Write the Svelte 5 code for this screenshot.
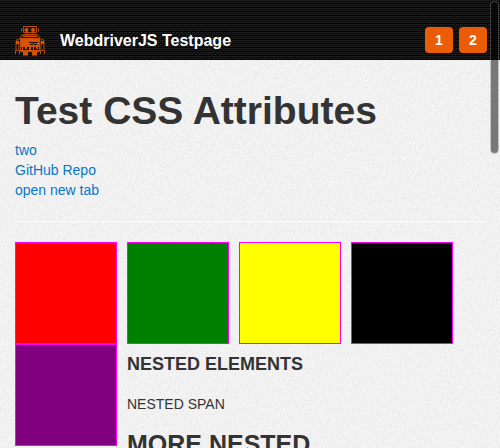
<script>
  const pages = [1, 2];
  const links = ['two', 'GitHub Repo', 'open new tab'];
  const boxes = ['red', 'green', 'yellow', 'black'];
</script>

<div class="page">
  <header>
    <a class="brand" href="#home">
      <svg class="logo" viewBox="0 0 30 30" aria-hidden="true">
        <g fill="none" stroke="#b84906" stroke-width="1">
          <path d="M8.500 6.500V.5h13v6zM6.500 2.500v3M23.500 2.500v3M12 7v1.500M18 7v1.500" />
          <path d="M5.500 25.500V12q0-3.500 3.500-3.500h12q3.500 0 3.500 3.500v13.500z" />
          <path d="M5 13H3.500Q1 13 1 16v8M25 13h1.500Q29 13 29 16v8M4 15v9M26 15v9" />
          <path d="M.5 28v-3.500h4V28M25.500 28v-3.500h4V28" />
        </g>
        <g fill="#d65202">
          <circle cx="11.500" cy="4" r="2" />
          <circle cx="18" cy="4" r="2" />
          <path d="M8 9.500h14v1.500H8zM6 12h18v8H6zM6 20h18v1H6zM6 24h18v1.500H6zM8 26h5v3.500H8zM17 26h5v3.500h-5z" />
          <path d="M7 21h1v3H7zM10 21h2v2h-2zM14 21h2v3h-2zM18 21h1v3h-1zM21 21h2v2h-2z" />
          <path d="M1 15h3v3H1zM26 15h3v3h-3z" />
        </g>
        <path stroke="#1d0c03" fill="none" d="M14 16.500h9M15 18.500h3M19 18.500h3M18.500 16v2" />
      </svg>
      <strong>WebdriverJS Testpage</strong>
    </a>
    <nav aria-label="Pages">
      {#each pages as page}
        <button type="button">{page}</button>
      {/each}
    </nav>
  </header>

  <main>
    <svg class="grain" aria-hidden="true">
      <filter id="paper" x="0" y="0" width="100%" height="100%">
        <feTurbulence type="fractalNoise" baseFrequency=".5" numOctaves="2" />
        <feColorMatrix values="0 0 0 0 0  0 0 0 0 0  0 0 0 0 0  .09 0 0 0 -.024" />
      </filter>
      <rect width="100%" height="100%" filter="url(#paper)" />
    </svg>
    <h1>Test CSS Attributes</h1>
    <ul>
      {#each links as link}
        <li><a href="#{link}">{link}</a></li>
      {/each}
    </ul>
    <hr />
    <div class="boxes">
      {#each boxes as box}
        <div class="box {box}"></div>
      {/each}
    </div>
    <section class="nested">
      <div class="box purple"></div>
      <div class="copy">
        <h3>NESTED ELEMENTS</h3>
        <span>NESTED SPAN</span>
        <h2>MORE NESTED</h2>
      </div>
    </section>
  </main>
  <div class="scrollbar"></div>
</div>

<style>
  .page {
    position: relative;
    height: 100vh;
    overflow: hidden;
    background: #f6f6f6;
    color: #333;
    font: 14px/20px "Liberation Sans", Arial, sans-serif;
  }

  header {
    display: flex;
    align-items: flex-end;
    justify-content: space-between;
    box-sizing: border-box;
    height: 60px;
    padding: 0 13px 4px 15px;
    background-color: #060606;
    background-image:
      conic-gradient(from 0deg at 3px 1px, transparent 75%, #202020 75%),
      conic-gradient(from 0deg at 3px 1px, transparent 75%, #202020 75%),
      linear-gradient(#0c0c0c 50%, #050505 50%);
    background-size: 4px 4px;
    background-position: 0 0, 2px 2px, 0 0;
  }

  .brand {
    display: flex;
    align-items: center;
    gap: 15px;
    color: #fff;
    font-size: 16px;
    text-decoration: none;
  }

  .logo {
    display: block;
    width: 30px;
    height: 30px;
  }

  nav {
    display: flex;
    gap: 6px;
    padding-bottom: 3px;
  }

  button {
    width: 28px;
    height: 26px;
    padding: 0;
    border: 0;
    border-radius: 4px;
    background: #eb5c07;
    color: #fff;
    font: bold 14px/26px "Liberation Sans", Arial, sans-serif;
  }

  main {
    position: relative;
    isolation: isolate;
    padding: 31px 15px 0;
  }

  .grain {
    position: absolute;
    inset: 0;
    z-index: -1;
    width: 100%;
    height: 100%;
  }

  h1,
  h2,
  h3 {
    margin: 0;
    line-height: 40px;
  }

  h1 {
    font-size: 39px;
  }

  h2 {
    font-size: 25px;
  }

  h3 {
    font-size: 18px;
  }

  ul {
    margin: 9px 0 20px;
    padding: 0;
    list-style: none;
  }

  li a {
    color: #0877c8;
    text-decoration: none;
  }

  hr {
    margin: 0 0 20px;
    border: 0;
    border-top: 1px solid #eee;
    border-bottom: 1px solid #fff;
  }

  .boxes,
  .nested {
    display: flex;
    gap: 10px;
  }

  .box {
    flex: none;
    width: 100px;
    height: 100px;
    border: 1px solid #f0f;
  }

  .red { background: red; }
  .green { background: green; }
  .yellow { background: yellow; }
  .black { background: black; }
  .purple { background: purple; }

  .copy span {
    display: block;
    margin: 10px 0;
  }

  .scrollbar {
    position: absolute;
    top: 1px;
    right: 1px;
    box-sizing: border-box;
    width: 9px;
    height: 153px;
    border: 1px solid rgba(130, 130, 130, .4);
    border-radius: 5px;
    background: rgba(0, 0, 0, .5);
    background-clip: padding-box;
  }
</style>
